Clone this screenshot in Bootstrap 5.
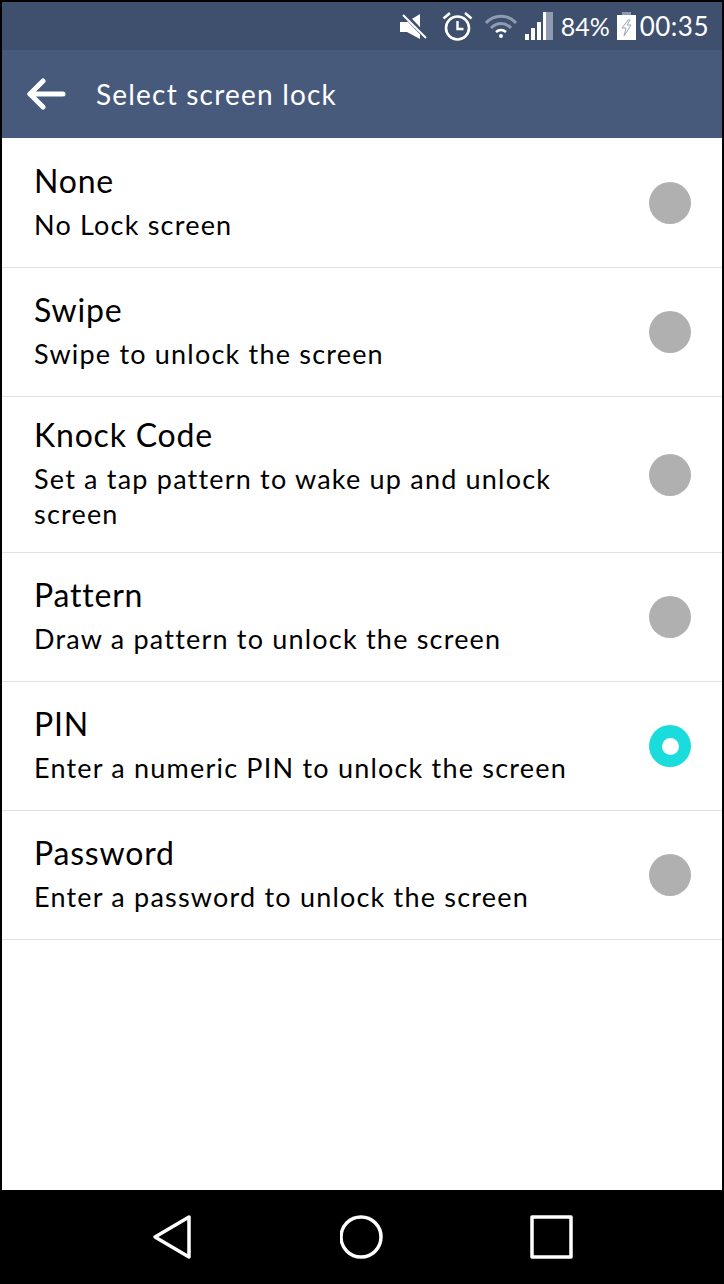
<!DOCTYPE html>
<html lang="en">
<head>
    <meta charset="UTF-8">
    <meta name="viewport" content="width=device-width, initial-scale=1.0">
    <title>Select screen lock</title>
    <link rel="stylesheet" href="https://cdn.jsdelivr.net/npm/bootstrap@5.3.0/dist/css/bootstrap.min.css">
    <style>
        html, body { height: 100%; }
        body { background: #000; padding: 2px 2px 0; font-family: "Lato", "Liberation Sans", sans-serif; color: #000; overflow: hidden; }
        .phone { height: 1282px; }
        .status-strip { height: 48px; background: #3f4f6e; color: #fff; padding-right: 13px; font-size: 26px; line-height: 1; }
        .status-strip svg { display: block; flex: none; }
        .ic-mute { margin-right: 15px; }
        .ic-alarm { margin-right: 12px; }
        .ic-wifi { margin-right: 8px; }
        .ic-signal { margin-right: 8px; }
        .pct-text { margin-right: 9px; width: 47px; font-size: 25px; white-space: nowrap; }
        .ic-batt { margin-right: 4px; }
        .clock-text { letter-spacing: .5px; }
        .title-bar { height: 88px; background: #475a7c; color: #fff; padding-left: 24px; }
        .title-text { font-size: 28px; margin-left: 30px; letter-spacing: 1.2px; }
        .screen-body { background: #fff; padding-top: 1px; }
        .lock-row { min-height: 129px; padding: 0 31px 0 32px; border-color: #e0e0e0; color: #000; }
        .lock-title { font-size: 32px; line-height: 44px; margin-bottom: 4px; letter-spacing: .8px; }
        .lock-sub { font-size: 27px; line-height: 35px; letter-spacing: 1.2px; }
        .lock-text { max-width: 545px; padding: 16px 0 21px; }
        .radio-dot { width: 42px; height: 42px; border-radius: 50%; background: #b0b0b0; flex: none; }
        .radio-dot.is-on { background: #1adcdc; display: flex; align-items: center; justify-content: center; }
        .radio-dot.is-on::after { content: ""; width: 17px; height: 17px; border-radius: 50%; background: #fff; }
        .nav-strip { height: 94px; background: #000; gap: 146px; }
    </style>
</head>
<body>
    <div class="phone d-flex flex-column">
        <div class="status-strip d-flex align-items-center justify-content-end flex-shrink-0">
            <svg class="ic-mute" width="27" height="27" viewBox="0 0 27 27"><path d="M0 9H7L20 1V26L7 19H0z" fill="#fff"/><path d="M3 0 27 25" stroke="#3f4f6e" stroke-width="5"/><path d="M3 2 26 25" stroke="#fff" stroke-width="2"/></svg>
            <svg class="ic-alarm" width="31" height="30" viewBox="0 0 31 30" fill="none" stroke="#fff"><circle cx="15.5" cy="17" r="11.5" stroke-width="2.6"/><path d="M15.5 10v8h6" stroke-width="2.4"/><path d="M1.5 7.5 8 2M29.5 7.5 23 2" stroke-width="2.6"/></svg>
            <svg class="ic-wifi" width="32" height="24" viewBox="0 0 32 24" fill="none" stroke="#8f9bb0"><path d="M1 9c8-9 22-9 30 0" stroke-width="3"/><path d="M6 14c6-6 14-6 20 0" stroke-width="3"/><path d="M11 18c3-2.5 7-2.5 10 0" stroke="#fff" stroke-width="2.6"/><circle cx="16" cy="22" r="2" fill="#fff" stroke="none"/></svg>
            <svg class="ic-signal" width="28" height="28" viewBox="0 0 28 28"><rect x="0" y="22" width="4" height="6" fill="#fff"/><rect x="6" y="16" width="4" height="12" fill="#fff"/><rect x="12" y="10" width="4" height="18" fill="#fff"/><rect x="18" y="0" width="3" height="28" fill="#fff"/><rect x="21" y="0" width="7" height="28" fill="#8f9bb0"/></svg>
            <span class="pct-text">84%</span>
            <svg class="ic-batt" width="19" height="28" viewBox="0 0 19 28"><path d="M0 3h19v25H0z" fill="#fff"/><path d="M5 0h9v3H5z" fill="#8f9bb0"/><path d="M11 8 5 16h4l-2 8 7-11h-4l3-5z" fill="none" stroke="#9aa3b3" stroke-width="1"/></svg>
            <span class="clock-text">00:35</span>
        </div>

        <div class="title-bar d-flex align-items-center flex-shrink-0">
            <svg width="40" height="32" viewBox="0 0 40 32" fill="none" stroke="#fff" stroke-width="5" stroke-linecap="round" stroke-linejoin="round"><path d="M4 16h33"/><path d="M17 3 4 16l13 13"/></svg>
            <span class="title-text">Select screen lock</span>
        </div>

        <div class="screen-body flex-grow-1">
            <div class="list-group list-group-flush" id="lockList"></div>
        </div>

        <div class="nav-strip d-flex align-items-center justify-content-center flex-shrink-0">
            <svg width="44" height="46" viewBox="0 0 44 46" fill="none" stroke="#fff" stroke-width="3.5" stroke-linejoin="round"><path d="M39 3v40L5 23z"/></svg>
            <svg width="44" height="46" viewBox="0 0 44 46" fill="none" stroke="#fff" stroke-width="3.5"><circle cx="21" cy="23" r="20"/></svg>
            <svg width="44" height="46" viewBox="0 0 44 46" fill="none" stroke="#fff" stroke-width="3.5" stroke-linejoin="round"><rect x="2" y="3" width="39" height="40"/></svg>
        </div>
    </div>

    <script>
        // Lock options, PIN is the current one
        const locks = [
            { name: 'None', sub: 'No Lock screen' },
            { name: 'Swipe', sub: 'Swipe to unlock the screen' },
            { name: 'Knock Code', sub: 'Set a tap pattern to wake up and unlock screen' },
            { name: 'Pattern', sub: 'Draw a pattern to unlock the screen' },
            { name: 'PIN', sub: 'Enter a numeric PIN to unlock the screen', on: true },
            { name: 'Password', sub: 'Enter a password to unlock the screen' }
        ];
        document.getElementById('lockList').innerHTML = locks.map(l => `
            <div class="list-group-item lock-row d-flex align-items-center justify-content-between">
                <div class="lock-text">
                    <div class="lock-title">${l.name}</div>
                    <div class="lock-sub">${l.sub}</div>
                </div>
                <span class="radio-dot ${l.on ? 'is-on' : ''}"></span>
            </div>`).join('') + '<div class="list-group-item p-0"></div>';
    </script>
    <script src="https://cdn.jsdelivr.net/npm/bootstrap@5.3.0/dist/js/bootstrap.bundle.min.js"></script>
</body>
</html>
